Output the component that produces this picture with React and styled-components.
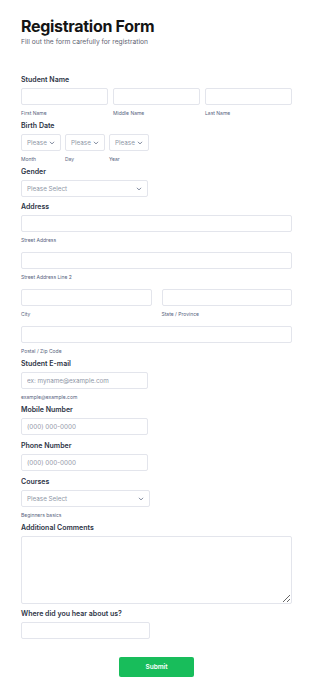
import React from "react";
import styled, { createGlobalStyle } from "styled-components";

const GlobalStyle = createGlobalStyle`
  html, body {
    margin: 0;
    padding: 0;
    background: #ffffff;
  }
  body {
    font-family: Inter, "Noto Sans", sans-serif;
    color: #2c3345;
  }
  * {
    box-sizing: border-box;
  }
`;

const Form = styled.form`
  width: 271px;
  margin-left: 21px;
  padding-top: 16px;
  padding-bottom: 17px;
`;

const Header = styled.div`
  margin-bottom: 28px;
`;

const Title = styled.h1`
  margin: 0;
  font-size: 16px;
  line-height: 20px;
  font-weight: 700;
  letter-spacing: -0.3px;
  color: #141414;
`;

const Subtitle = styled.p`
  margin: 1px 0 0;
  font-size: 6.7px;
  line-height: 10px;
  color: #5f6573;
`;

const Field = styled.div`
  margin-bottom: ${(p) => p.$gap ?? 4}px;
`;

const Label = styled.div`
  font-size: 7px;
  line-height: 10px;
  font-weight: 600;
  color: #2c3345;
  margin-bottom: 3px;
`;

const Row = styled.div`
  display: grid;
  grid-template-columns: ${(p) => p.$cols};
  column-gap: ${(p) => p.$gap}px;
  width: ${(p) => (p.$width ? `${p.$width}px` : "100%")};
`;

const Cell = styled.div`
  margin-bottom: ${(p) => p.$mb ?? 0}px;
`;

const Input = styled.input`
  display: block;
  width: ${(p) => (p.$width ? `${p.$width}px` : "100%")};
  height: 17px;
  border: 1px solid #e3e5ec;
  border-radius: 2px;
  padding: 0 5px;
  font-family: Inter, "Noto Sans", sans-serif;
  font-size: 6.3px;
  color: #2c3345;
  background: #fff;
  outline: none;
  &::placeholder {
    color: #8f96a6;
  }
`;

const SelectBox = styled.div`
  position: relative;
  width: ${(p) => (p.$width ? `${p.$width}px` : "100%")};
  height: 17px;
  border: 1px solid #e3e5ec;
  border-radius: 2px;
  display: flex;
  align-items: center;
  padding: 0 11px 0 5px;
  font-size: 6.3px;
  color: #8f96a6;
  background: #fff;
  white-space: nowrap;
`;

const SelectText = styled.span`
  flex: 1;
  min-width: 0;
  overflow: hidden;
`;

const Chevron = styled.svg`
  position: absolute;
  right: 5px;
  top: 5px;
  width: 6px;
  height: 6px;
`;

const TextArea = styled.textarea`
  display: block;
  width: 100%;
  height: 68px;
  border: 1px solid #e3e5ec;
  border-radius: 2px;
  padding: 4px 5px;
  font-family: Inter, "Noto Sans", sans-serif;
  font-size: 6.3px;
  outline: none;
  resize: vertical;
`;

const Sub = styled.div`
  margin-top: 4px;
  font-size: 5px;
  line-height: 8px;
  color: #57647e;
`;

const ButtonRow = styled.div`
  display: flex;
  justify-content: center;
  margin-top: 18px;
`;

const SubmitButton = styled.button`
  width: 75px;
  height: 20px;
  border: none;
  border-radius: 2px;
  background: #18bd5b;
  color: #fff;
  font-family: Inter, "Noto Sans", sans-serif;
  font-size: 6.5px;
  font-weight: 600;
  cursor: pointer;
`;

const Select = ({ text, width }) => (
  <SelectBox $width={width}>
    <SelectText>{text}</SelectText>
    <Chevron viewBox="0 0 10 10">
      <path
        d="M2 3.5 L5 6.5 L8 3.5"
        fill="none"
        stroke="#57647e"
        strokeWidth="1.3"
        strokeLinecap="round"
        strokeLinejoin="round"
      />
    </Chevron>
  </SelectBox>
);

export default function App() {
  return (
    <>
      <GlobalStyle />
      <Form onSubmit={(e) => e.preventDefault()}>
        <Header>
          <Title>Registration Form</Title>
          <Subtitle>Fill out the form carefully for registration</Subtitle>
        </Header>

        <Field>
          <Label>Student Name</Label>
          <Row $cols="1fr 1fr 1fr" $gap={5}>
            <Cell>
              <Input />
              <Sub>First Name</Sub>
            </Cell>
            <Cell>
              <Input />
              <Sub>Middle Name</Sub>
            </Cell>
            <Cell>
              <Input />
              <Sub>Last Name</Sub>
            </Cell>
          </Row>
        </Field>

        <Field>
          <Label>Birth Date</Label>
          <Row $cols="40px 40px 40px" $gap={4} $width={128}>
            <Cell>
              <Select text="Please" />
              <Sub>Month</Sub>
            </Cell>
            <Cell>
              <Select text="Please" />
              <Sub>Day</Sub>
            </Cell>
            <Cell>
              <Select text="Please" />
              <Sub>Year</Sub>
            </Cell>
          </Row>
        </Field>

        <Field $gap={5}>
          <Label>Gender</Label>
          <Select text="Please Select" width={127} />
        </Field>

        <Field>
          <Label>Address</Label>
          <Cell $mb={8}>
            <Input />
            <Sub>Street Address</Sub>
          </Cell>
          <Cell $mb={8}>
            <Input />
            <Sub>Street Address Line 2</Sub>
          </Cell>
          <Row $cols="1fr 1fr" $gap={10}>
            <Cell $mb={8}>
              <Input />
              <Sub>City</Sub>
            </Cell>
            <Cell $mb={8}>
              <Input />
              <Sub>State / Province</Sub>
            </Cell>
          </Row>
          <Cell>
            <Input />
            <Sub>Postal / Zip Code</Sub>
          </Cell>
        </Field>

        <Field>
          <Label>Student E-mail</Label>
          <Input placeholder="ex: myname@example.com" $width={127} />
          <Sub>example@example.com</Sub>
        </Field>

        <Field $gap={6}>
          <Label>Mobile Number</Label>
          <Input placeholder="(000) 000-0000" $width={127} />
        </Field>

        <Field $gap={6}>
          <Label>Phone Number</Label>
          <Input placeholder="(000) 000-0000" $width={127} />
        </Field>

        <Field>
          <Label>Courses</Label>
          <Select text="Please Select" width={129} />
          <Sub>Beginners basics</Sub>
        </Field>

        <Field $gap={5}>
          <Label>Additional Comments</Label>
          <TextArea />
        </Field>

        <Field>
          <Label>Where did you hear about us?</Label>
          <Input $width={129} />
        </Field>

        <ButtonRow>
          <SubmitButton type="submit">Submit</SubmitButton>
        </ButtonRow>
      </Form>
    </>
  );
}
